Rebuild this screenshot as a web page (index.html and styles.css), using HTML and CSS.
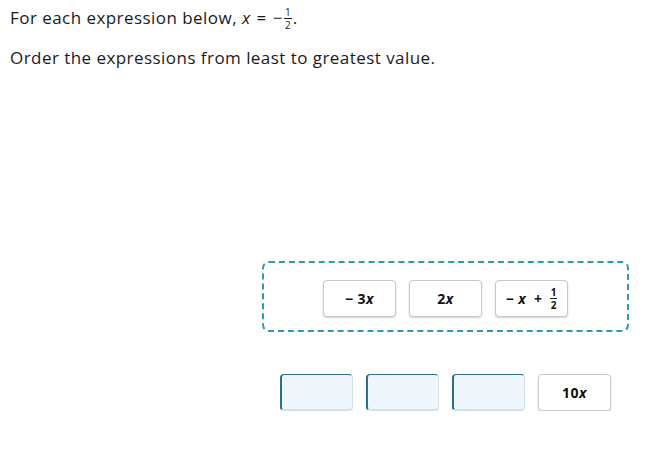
FILE: index.html
```html
<!DOCTYPE html>
<html>
<head>
<meta charset="utf-8">
<link rel="stylesheet" href="styles.css">
</head>
<body>
<div class="page">
  <p class="line first"><span>For each expression below,</span><i class="var">x</i><span class="op">=</span><span class="neg">−</span><span class="frac big"><span class="num">1</span><span class="den">2</span></span><span class="dot">.</span></p>
  <p class="line second">Order the expressions from least to greatest value.</p>
  <div class="work">
    <div class="pool">
      <div class="tile"><span class="neg">−</span><span>3</span><i>x</i></div>
      <div class="tile"><span>2</span><i>x</i></div>
      <div class="tile"><span class="neg">−</span><i>x</i><span class="plus">+</span><span class="frac"><span class="num">1</span><span class="den">2</span></span></div>
    </div>
    <div class="answers">
      <div class="slot"></div>
      <div class="slot"></div>
      <div class="slot"></div>
      <div class="tile"><span>10</span><i>x</i></div>
    </div>
  </div>
</div>
</body>
</html>
```
FILE: styles.css
```css
html, body {
  margin: 0;
  padding: 0;
  background: #ffffff;
}
.page {
  font-family: "Open Sans", "Lato", sans-serif;
  color: #1a1a1a;
  padding: 5px 0 0 10px;
}
.line {
  margin: 0;
  font-size: 17px;
  line-height: 22px;
  letter-spacing: 0.45px;
}
.first {
  height: 26px;
  display: flex;
  align-items: center;
}
.first .var { margin-left: 5px; }
.second {
  margin-top: 16px;
}
.op { margin: 0 6px 0 6px; }
.first .neg { margin-right: 1px; }
.dot { margin-left: 1px; }
.frac {
  display: inline-flex;
  flex-direction: column;
  align-items: center;
  font-size: 10px;
  font-weight: 700;
  letter-spacing: 0;
}
.frac .num {
  border-bottom: 1px solid #1a1a1a;
  padding: 0 1px;
  line-height: 12px;
}
.frac .den { line-height: 12px; }
.big { font-weight: 400; font-size: 10px; margin-top: 1px; }
.big .num, .big .den { line-height: 12px; }
.work {
  margin-left: 252px;
  margin-top: 192px;
  width: 367px;
}
.pool {
  box-sizing: border-box;
  height: 71px;
  border: 2px dashed #2d9ab5;
  border-radius: 7px;
  display: flex;
  justify-content: center;
  align-items: flex-start;
  gap: 13px;
  padding-top: 17px;
}
.tile {
  box-sizing: border-box;
  width: 73px;
  height: 37px;
  border: 1px solid #c9c9c9;
  border-radius: 4px;
  box-shadow: 0 1px 2px rgba(0,0,0,0.18);
  background: #ffffff;
  display: flex;
  align-items: center;
  justify-content: center;
  font-size: 14px;
  font-weight: 700;
  color: #111;
  letter-spacing: 0.5px;
}
.tile .plus { margin: 0 7px 0 8px; }
.tile .neg { margin-right: 4px; }
.answers {
  margin-top: 42px;
  display: flex;
  justify-content: center;
  gap: 13px;
}
.slot {
  box-sizing: border-box;
  width: 73px;
  height: 37px;
  background: #eef6fc;
  border-left: 2px solid #2a6f8c;
  border-top: 1px solid #2a6f8c;
  border-right: 1px solid #d3e2ea;
  border-bottom: 2px solid #d3e0e8;
  border-radius: 4px;
}
```
